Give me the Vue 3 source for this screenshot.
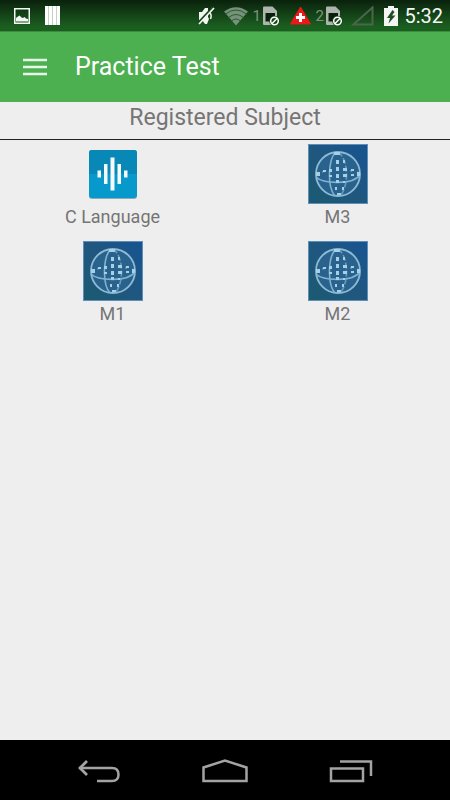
<template>

<div class="pantalla">

    <!-- STATUS BAR -->

    <div class="status-bar">

        <div class="notifications">

            <svg width="16" height="16" viewBox="0 0 16 16">
                <path d="M0 0H16V16H0Z M1.5 1.5V14.5H14.5V1.5Z" fill="#f4f8f4" fill-rule="evenodd" />
                <path d="M2 13.5V10L4 8.5L5.5 7.5L7.5 9.5L9 10L10.5 9L12 10.5L14 11V13.5Z" fill="#f4f8f4" />
            </svg>

            <svg width="16" height="20" viewBox="0 0 16 20">
                <path d="M0 0H15V19H0Z" fill="#c3d3c3" />
                <path d="M0 0H3V19H0Z M4 0H7V19H4Z M8 0H11V19H8Z M12 0H15V19H12Z" fill="#ffffff" />
            </svg>

        </div>

        <div class="indicators">

            <svg width="22" height="20" viewBox="0 0 22 20">
                <path d="M3 6H6L9 2H12V11L13 13L11 18H9L6 14H3Z" fill="#f2f5f2" />
                <path d="M14 7Q16 9 14.5 13" fill="none" stroke="#f2f5f2" stroke-width="1.5" />
                <path d="M2 17L17 1" stroke="#16481b" stroke-width="2" />
                <path d="M3 18L18 2" stroke="#f2f5f2" stroke-width="1.8" />
            </svg>

            <svg width="26" height="20" viewBox="0 0 26 20">
                <path d="M2 5.5Q14 -3 26 5.5L14 19.5Z" fill="#78917a" />
                <path d="M3.5 8Q14 0 24.5 8M6.5 11.5Q14 5.5 21.5 11.5M9.5 15Q14 11 18.5 15" fill="none" stroke="#285d2d" stroke-width="1" />
            </svg>

            <div v-for="sim in sims" :key="sim" class="sim">
                <span>{{ sim }}</span>
                <svg width="22" height="20" viewBox="0 0 22 20">
                    <path d="M1 1.5Q1 .5 2 .5H10.5L15 5V18Q15 19 14 19H2Q1 19 1 18Z" fill="#aeb5ae" />
                    <path d="M3.5 7H13V15.5H3.5Z" fill="#082009" />
                    <circle cx="12.5" cy="15" r="5.300" fill="#174a1b" />
                    <circle cx="12.5" cy="15" r="3.800" fill="none" stroke="#ffffff" stroke-width="1.5" />
                    <path d="M10 17.5L15 12.5" stroke="#ffffff" stroke-width="1.4" />
                </svg>
                <svg v-if="sim === 1" width="27" height="20" viewBox="0 0 27 20">
                    <path d="M16.5 1L26.500 18H6.500Z" fill="#ee1717" stroke="#ee1717" stroke-linejoin="round" />
                    <path d="M16.5 7V16M12 11.5H21" stroke="#ffffff" stroke-width="3" />
                </svg>
            </div>

            <svg width="28" height="20" viewBox="0 0 28 20">
                <path d="M2.5 18.5L21.5 1.5V18.5Z" fill="none" stroke="#4c654c" stroke-width="2" />
            </svg>

            <svg width="17" height="20" viewBox="0 0 17 20">
                <path d="M5 0H11V2H15V20H1V2H5Z" fill="#f3f6f3" />
                <path d="M9.5 4L4 12H7L5.5 17.5L12.5 9.5H9L11.5 6Z" fill="#234b26" />
            </svg>

            <span class="clock">5:32</span>

        </div>

    </div>


    <!-- TOOLBAR -->

    <header class="toolbar">

        <button type="button" class="menu" aria-label="Menu">
            <svg width="24" height="18" viewBox="0 0 24 18">
                <path d="M0 2H24M0 9H24M0 16H24" stroke="#e8f5e9" stroke-width="2.5" />
            </svg>
        </button>

        <h1>Practice Test</h1>

    </header>


    <!-- SUBJECTS -->

    <main>

        <h2>Registered Subject</h2>

        <div class="subjects">

            <button v-for="subject in subjects" :key="subject.name" type="button" class="subject">

                <svg v-if="subject.icon === 'wave'" width="60" height="60" viewBox="0 0 60 60">
                    <rect x="6" y="7" width="48" height="48" rx="3" fill="#8babb5" />
                    <rect x="6" y="6" width="48" height="48" rx="3" fill="#0899cc" />
                    <path d="M6 30V9Q6 6 9 6H51Q54 6 54 9V30Z" fill="#0788b6" />
                    <path d="M14.5 26.5H18V33.5H14.5Z M21 20H24.5V40H21Z M27.5 13.5H31.5V46.5H27.5Z M34.5 20H38V40H34.5Z M41 26.5H44.5V33.5H41Z" fill="#f5fafc" />
                </svg>

                <svg v-else width="60" height="60" viewBox="0 0 60 60">
                    <defs>
                        <linearGradient :id="'sky-' + subject.name" x1="1" y1="0" x2="0" y2="1">
                            <stop offset="0" stop-color="#175390" />
                            <stop offset=".5" stop-color="#205780" />
                            <stop offset="1" stop-color="#1b5a70" />
                        </linearGradient>
                    </defs>
                    <rect width="60" height="60" fill="#5d8fb8" />
                    <rect x="1" y="1" width="58" height="58" :fill="'url(#sky-' + subject.name + ')'" />
                    <circle cx="30" cy="30" r="22" fill="#28628d" stroke="#8dbbd6" stroke-width="1.8" />
                    <g fill="none" stroke="#82b2cf" stroke-width="1.6">
                        <path d="M28 8C20 15 19 43 27 52" />
                        <path d="M30 8C41 15 41 43 32 52" stroke-dasharray="6 2" stroke="#6699bb" />
                        <path d="M8 33C15 40 45 41 52 31" />
                        <path d="M8 31C14 25 45 24 52 30" stroke-dasharray="2 5" stroke="#6699bb" />
                    </g>
                    <g fill="#a6d0e5">
                        <path d="M26 8H32V11H26Z M8 28H12V32H8Z M49 28H52V32H49Z" />
                        <path d="M15 26H18V28H15Z M21 25H24V28H21Z M28 23H31V27H28Z M35 24H39V27H35Z M43 25H46V27H43Z" />
                        <path d="M21 31H24V33H21Z M28 30H31V34H28Z M35 30H39V33H35Z M43 30H46V32H43Z" />
                        <path d="M28 16H31V20H28Z M35 16H37V19H35Z M28 36H31V39H28Z M35 37H37V39H35Z M27 43H29V46H27Z M34 43H36V46H34Z M29 49H33V51H29Z" />
                    </g>
                </svg>

                <span>{{ subject.name }}</span>

            </button>

        </div>

    </main>


    <!-- NAVIGATION -->

    <nav class="nav-bar">

        <button type="button" aria-label="Back">
            <svg width="44" height="26" viewBox="0 0 44 26">
                <path d="M2 9H35Q41.5 9 41.5 15.5Q41.5 22 35 22H20" fill="none" stroke="#a3a3a3" stroke-width="2.5" />
                <path d="M10 2L3 9L10 16" fill="none" stroke="#a3a3a3" stroke-width="2.8" />
            </svg>
        </button>

        <button type="button" aria-label="Home">
            <svg width="46" height="26" viewBox="0 0 46 26">
                <path d="M1.5 22V8.5L23 1.5L44.5 8.5V22Z" fill="none" stroke="#a3a3a3" stroke-width="2.5" />
            </svg>
        </button>

        <button type="button" aria-label="Recent apps">
            <svg width="44" height="26" viewBox="0 0 44 26">
                <path d="M2 9.5H34V22H2Z" fill="none" stroke="#a3a3a3" stroke-width="2.5" />
                <path d="M11 2.5H42V17" fill="none" stroke="#a3a3a3" stroke-width="2.5" />
            </svg>
        </button>

    </nav>

</div>

</template>


<script setup>

const sims = [1, 2]


const subjects = [
    { name: "C Language", icon: "wave" },
    { name: "M3", icon: "globe" },
    { name: "M1", icon: "globe" },
    { name: "M2", icon: "globe" }
]

</script>


<style>

body{

margin:0;

background:#eeeeee;

}

</style>


<style scoped>

.pantalla{

display:flex;

flex-direction:column;

min-height:100vh;

background:#eeeeee;

font-family:Roboto, "Liberation Sans", sans-serif;

}


button{

padding:0;

border:0;

background:none;

font:inherit;

color:inherit;

cursor:pointer;

}


svg{

display:block;

flex:none;

}


.status-bar{

display:flex;

justify-content:space-between;

align-items:center;

box-sizing:border-box;

height:32px;

padding:0 7px 0 14px;

background:linear-gradient(#0a210c, #1b5e20 85%);

border-bottom:1px solid #388e3c;

}


.notifications{

display:flex;

align-items:center;

gap:15px;

}


.indicators{

display:flex;

align-items:center;

gap:4px;

}


.sim{

display:flex;

align-items:center;

}


.sim span{

width:10px;

font-size:15px;

line-height:20px;

color:#7f947f;

}


.clock{

font-size:20px;

line-height:24px;

color:#f5f8f5;

}


.toolbar{

display:flex;

align-items:center;

gap:28px;

box-sizing:border-box;

height:70px;

padding:0 23px;

background:#4caf50;

}


h1{

margin:0;

font-size:25px;

line-height:32px;

font-weight:400;

color:#ffffff;

}


main{

flex:1;

}


h2{

margin:0;

padding-bottom:5px;

border-bottom:1px solid #222222;

font-size:23px;

line-height:32px;

font-weight:400;

text-align:center;

color:#757575;

}


.subjects{

display:grid;

grid-template-columns:repeat(2,1fr);

row-gap:1px;

padding-top:4px;

}


.subject{

display:flex;

flex-direction:column;

align-items:center;

gap:1px;

height:96px;

font-size:18px;

line-height:24px;

color:#757575;

}


.nav-bar{

display:flex;

justify-content:center;

align-items:center;

height:60px;

background:#000000;

}


.nav-bar button{

display:flex;

justify-content:center;

width:28%;

padding-top:4px;

}

</style>
